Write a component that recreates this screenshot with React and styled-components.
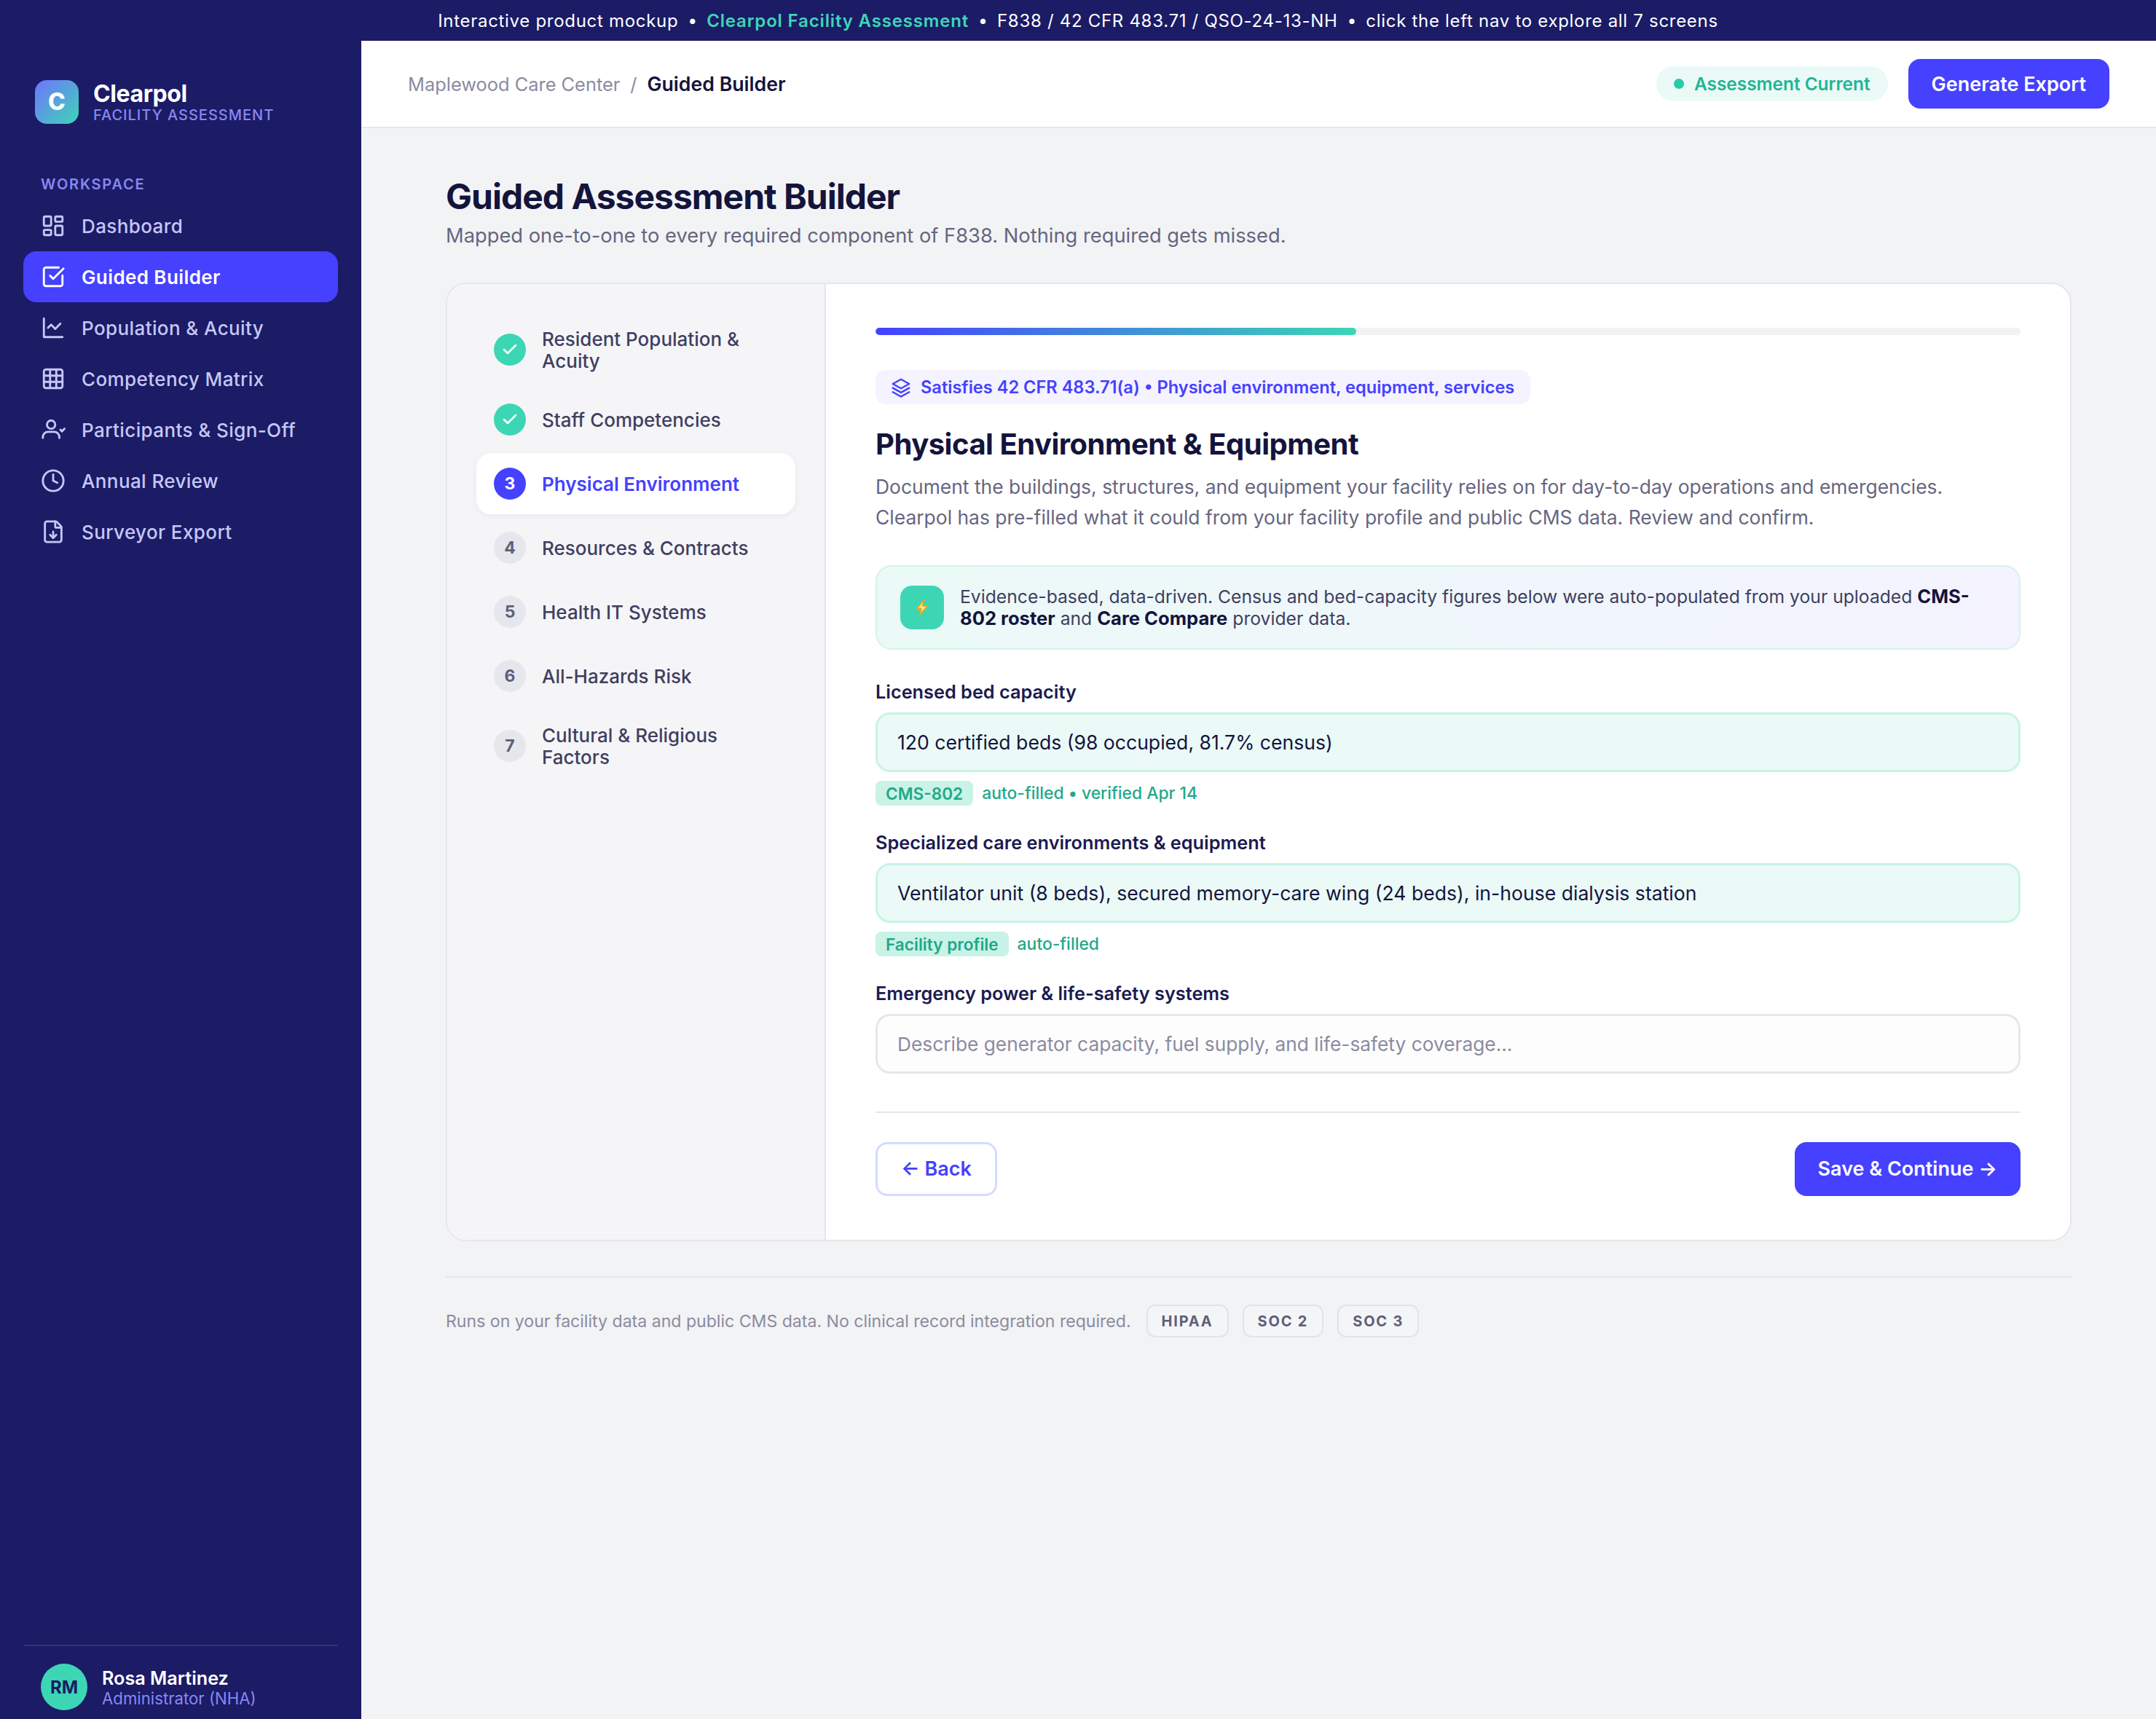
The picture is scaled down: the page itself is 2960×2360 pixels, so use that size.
import React from "react"
import styled, { createGlobalStyle } from "styled-components"
import { LayoutDashboard, SquareCheckBig, Grid3x3, Clock, FileDown, Check } from "lucide-react"

const Global = createGlobalStyle`
  * { box-sizing: border-box; }
  html, body { margin: 0; padding: 0; background: #f2f3f5; }
  body { font-family: Inter, "Noto Sans", sans-serif; color: #14143c; }
  #root { zoom: 2; }
`

const Page = styled.div`
  width: 1480px;
  height: 1180px;
  display: flex;
  flex-direction: column;
  overflow: hidden;
`

const Banner = styled.div`
  height: 28px;
  flex: none;
  background: #1b1b66;
  color: #fff;
  font-size: 12px;
  font-weight: 400;
  letter-spacing: 0.35px;
  display: flex;
  align-items: center;
  justify-content: center;
  white-space: pre;
  b { font-weight: 600; letter-spacing: 0.42px; color: #3dd6b5; }
`

const BannerSep = styled.span`
  font-size: 11.5px;
  letter-spacing: 0;
`

const Shell = styled.div`
  flex: 1;
  display: flex;
  min-height: 0;
`

const Sidebar = styled.aside`
  width: 248px;
  flex: none;
  background: #1b1b66;
  padding: 26.5px 16px 6px;
  display: flex;
  flex-direction: column;
`

const Brand = styled.div`
  display: flex;
  align-items: center;
  gap: 10px;
  padding: 0 8px;
  margin-bottom: 35px;
`

const LogoMark = styled.div`
  width: 30px;
  height: 30px;
  border-radius: 8px;
  background: linear-gradient(135deg, #6f74ff, #3dd6b5);
  color: #fff;
  font-size: 16px;
  font-weight: 800;
  display: flex;
  align-items: center;
  justify-content: center;
`

const BrandText = styled.div`
  padding-top: 1.5px;
`

const BrandName = styled.div`
  color: #fff;
  font-size: 16px;
  font-weight: 700;
  letter-spacing: -0.2px;
  line-height: 17px;
`

const BrandSub = styled.div`
  color: #8888f0;
  font-size: 10px;
  font-weight: 500;
  letter-spacing: 0.5px;
  line-height: 12px;
`

const NavLabel = styled.div`
  color: #8888f0;
  font-size: 10px;
  font-weight: 600;
  letter-spacing: 0.9px;
  padding: 0 12px;
  line-height: 13px;
  margin-bottom: 4.5px;
`

const NavItem = styled.div`
  height: 35px;
  flex: none;
  display: flex;
  align-items: center;
  gap: 11px;
  padding: 0 12px;
  border-radius: 9px;
  font-size: 13px;
  letter-spacing: 0.2px;
  font-weight: ${p => (p.$active ? 600 : 500)};
  color: ${p => (p.$active ? "#fff" : "#c6c7f5")};
  background: ${p => (p.$active ? "#4541ff" : "transparent")};
  svg { width: 17px; height: 17px; flex: none; }
`

const UserRow = styled.div`
  margin-top: auto;
  border-top: 1px solid rgba(255, 255, 255, 0.1);
  padding: 12px 12px 0;
  display: flex;
  align-items: center;
  gap: 10px;
`

const Avatar = styled.div`
  width: 32px;
  height: 32px;
  border-radius: 50%;
  background: #3dd6b5;
  color: #1b1b66;
  font-size: 12px;
  font-weight: 700;
  display: flex;
  align-items: center;
  justify-content: center;
`

const UserName = styled.div`
  color: #fff;
  font-size: 12.6px;
  font-weight: 600;
  line-height: 16px;
`

const UserRole = styled.div`
  color: #8888f0;
  font-size: 11.1px;
  line-height: 12px;
`

const Content = styled.main`
  flex: 1;
  min-width: 0;
  display: flex;
  flex-direction: column;
`

const Topbar = styled.header`
  height: 60px;
  flex: none;
  background: #fff;
  border-bottom: 1px solid #e6e7eb;
  padding: 0 32px;
  display: flex;
  align-items: center;
  justify-content: space-between;
`

const Crumbs = styled.div`
  font-size: 12.7px;
  color: #8b8ba0;
  display: flex;
  align-items: baseline;
  gap: 7px;
  b { color: #14143c; font-weight: 600; font-size: 13.35px; }
`

const TopActions = styled.div`
  display: flex;
  align-items: center;
  gap: 14px;
`

const StatusPill = styled.div`
  height: 24px;
  border-radius: 12px;
  background: #ebfaf7;
  color: #1fb594;
  font-size: 12.2px;
  font-weight: 600;
  padding: 0 12px;
  display: flex;
  align-items: center;
  gap: 7px;
  &::before {
    content: "";
    width: 7px;
    height: 7px;
    border-radius: 50%;
    background: #28cba8;
  }
`

const PrimaryButton = styled.button`
  height: ${p => p.$h || 34}px;
  padding: 0 16px;
  border: none;
  border-radius: 8px;
  background: #4541ff;
  color: #fff;
  font-family: inherit;
  font-size: 13.5px;
  font-weight: 600;
`

const Body = styled.div`
  flex: 1;
  padding: 32px 58px 0;
`

const PageTitle = styled.h1`
  margin: 0;
  font-size: 24px;
  line-height: 30px;
  font-weight: 700;
  letter-spacing: -0.5px;
  color: #14143c;
`

const PageSub = styled.p`
  margin: 2px 0 22px;
  font-size: 13.65px;
  line-height: 20px;
  color: #66667f;
`

const Card = styled.section`
  display: flex;
  height: 658px;
  background: #fff;
  border: 1px solid #e6e7eb;
  border-radius: 14px;
  overflow: hidden;
`

const Steps = styled.nav`
  width: 260px;
  flex: none;
  background: #f5f5f8;
  border-right: 1px solid #e6e7eb;
  padding: 20px;
  display: flex;
  flex-direction: column;
  gap: 2px;
`

const Step = styled.div`
  display: flex;
  align-items: center;
  gap: 11px;
  padding: 10px 12px;
  border-radius: 10px;
  font-size: 13px;
  line-height: 15px;
  font-weight: ${p => (p.$active ? 600 : 500)};
  color: ${p => (p.$active ? "#4541ff" : "#3f3f5f")};
  background: ${p => (p.$active ? "#fff" : "transparent")};
  box-shadow: ${p => (p.$active ? "0 1px 4px rgba(20, 20, 60, 0.06)" : "none")};
`

const StepLabel = styled.span`
  padding-top: 0.5px;
  margin-bottom: -0.5px;
`

const stepColors = {
  done: ["#3dd6b5", "#fff"],
  active: ["#4541ff", "#fff"],
  todo: ["#e6e7ec", "#5f5f7a"],
}

const StepDot = styled.span`
  width: 22px;
  height: 22px;
  flex: none;
  border-radius: 50%;
  background: ${p => stepColors[p.$state][0]};
  color: ${p => stepColors[p.$state][1]};
  font-size: 11.5px;
  font-weight: 700;
  display: flex;
  align-items: center;
  justify-content: center;
  svg { width: 12px; height: 12px; stroke-width: 2.5; }
`

const Form = styled.div`
  flex: 1;
  min-width: 0;
  padding: 30px 34px;
  display: flex;
  flex-direction: column;
  > * { flex: none; }
`

const Progress = styled.div`
  height: 5px;
  border-radius: 3px;
  background: #f1f2f4;
  margin-bottom: 24px;
  overflow: hidden;
`

const ProgressFill = styled.div`
  height: 100%;
  border-radius: 3px;
  background: linear-gradient(90deg, #4541ff, #3dd6b5);
`

const Ref = styled.div`
  align-self: flex-start;
  height: 23.5px;
  display: flex;
  align-items: center;
  gap: 6px;
  padding: 0 11px 0 10px;
  border-radius: 7px;
  background: #f4f3ff;
  color: #4541ff;
  font-size: 11.8px;
  font-weight: 600;
  svg { width: 15px; height: 15px; }
`

const StepTitle = styled.h2`
  margin: 14.5px 0 5.5px;
  font-size: 20px;
  line-height: 26px;
  font-weight: 700;
  letter-spacing: -0.25px;
  color: #14143c;
`

const Lead = styled.p`
  margin: 0 0 22.5px;
  font-size: 13.22px;
  line-height: 21px;
  color: #66667f;
`

const Callout = styled.div`
  height: 58px;
  display: flex;
  align-items: center;
  gap: 11px;
  padding: 0 16px;
  border: 1px solid #cff5ea;
  border-radius: 11px;
  background: linear-gradient(90deg, #ebfaf7, #f4f3ff);
  font-size: 12.35px;
  line-height: 15px;
  color: #3f3f5f;
  margin-bottom: 21px;
  b { font-weight: 700; font-size: 12.8px; color: #14143c; }
`

const BoltBox = styled.div`
  width: 30px;
  height: 30px;
  flex: none;
  border-radius: 8px;
  background: #3dd6b5;
  display: flex;
  align-items: center;
  justify-content: center;
`

const Field = styled.div`
  margin-bottom: 17.6px;
`

const Label = styled.div`
  font-size: 12.65px;
  line-height: 16px;
  font-weight: 600;
  color: #1b1b50;
  margin-bottom: 6px;
`

const Input = styled.div`
  height: 41px;
  display: flex;
  align-items: center;
  padding: 0 13.5px;
  border: 1.5px solid ${p => (p.$filled ? "#c9f3e7" : "#e6e7eb")};
  border-radius: 10px;
  background: ${p => (p.$filled ? "#ebfaf7" : "#fdfdfe")};
  color: ${p => (p.$filled ? "#14143c" : "#8b8ba0")};
  font-size: ${p => (p.$filled ? "13.3px" : "13.15px")};
`

const Source = styled.div`
  display: flex;
  align-items: center;
  gap: 6px;
  margin-top: 6px;
  color: #22a889;
  font-size: 11.45px;
  font-weight: 500;
`

const SourceTag = styled.span`
  height: 17px;
  padding: 0 7px;
  border-radius: 4px;
  background: #c9f3e7;
  font-size: 11.3px;
  font-weight: 600;
  display: flex;
  align-items: center;
`

const Actions = styled.div`
  margin-top: 8px;
  padding-top: 20px;
  border-top: 1px solid #e6e7eb;
  display: flex;
  justify-content: space-between;
`

const BackButton = styled.button`
  height: 37px;
  padding: 0 16px;
  border: 1.5px solid #d3dcfb;
  border-radius: 8px;
  background: #fff;
  color: #4541ff;
  font-family: inherit;
  font-size: 13.5px;
  font-weight: 600;
`

const Footer = styled.footer`
  margin-top: 24px;
  padding-top: 18.5px;
  border-top: 1px solid #e6e7eb;
  display: flex;
  align-items: center;
  gap: 9.5px;
  font-size: 11.54px;
  color: #8b8ba0;
`

const Chip = styled.span`
  height: 22.5px;
  display: flex;
  align-items: center;
  padding: 0 9.5px;
  border: 1px solid #e2e3e8;
  border-radius: 6px;
  background: #f4f5f7;
  color: #5f5f7a;
  font-size: 10px;
  font-weight: 700;
  letter-spacing: 0.9px;
  &:first-of-type { margin-left: 1px; }
`

const lineIcon = { viewBox: "0 0 24 24", fill: "none", stroke: "currentColor", strokeWidth: 2, strokeLinecap: "round", strokeLinejoin: "round" }

const ChartIcon = () => (
  <svg {...lineIcon}>
    <path d="M3 3v18h18" />
    <path d="m19 9-5 5-4-4-3 3" transform="translate(0 -1)" />
  </svg>
)

const SignOffIcon = () => (
  <svg {...lineIcon}>
    <circle cx="10" cy="7" r="4" />
    <path d="M2 20v-1a5 5 0 0 1 5-5h6a5 5 0 0 1 5 5v1" />
    <path d="m19 12 1.5 1.5L23 11" />
  </svg>
)

const LayersIcon = () => (
  <svg {...lineIcon}>
    <path d="M12 3 21 8 12 13 3 8Z" />
    <path d="m3 12.5 9 5 9-5" />
    <path d="m3 17 9 5 9-5" />
  </svg>
)

const BoltIcon = () => (
  <svg width="9" height="12" viewBox="0 0 18 24" stroke="#eba615" strokeWidth="1.6" strokeLinejoin="round">
    <path d="M12 1 2 13.5h6L5 23 16 10h-6.5L12 1Z" fill="#fde68a" />
  </svg>
)

const nav = [
  ["Dashboard", LayoutDashboard],
  ["Guided Builder", SquareCheckBig, true],
  ["Population & Acuity", ChartIcon],
  ["Competency Matrix", Grid3x3],
  ["Participants & Sign-Off", SignOffIcon],
  ["Annual Review", Clock],
  ["Surveyor Export", FileDown],
]

const steps = [
  ["Resident Population & Acuity", "done"],
  ["Staff Competencies", "done"],
  ["Physical Environment", "active"],
  ["Resources & Contracts", "todo"],
  ["Health IT Systems", "todo"],
  ["All-Hazards Risk", "todo"],
  ["Cultural & Religious Factors", "todo"],
]

const Sep = () => <BannerSep>{"  •  "}</BannerSep>

export default function App() {
  return (
    <Page>
      <Global />
      <Banner>
        Interactive product mockup<Sep /><b>Clearpol Facility Assessment</b><Sep />F838 / 42 CFR 483.71 / QSO-24-13-NH<Sep />click the left nav to explore all 7 screens
      </Banner>
      <Shell>
        <Sidebar>
          <Brand>
            <LogoMark>C</LogoMark>
            <BrandText>
              <BrandName>Clearpol</BrandName>
              <BrandSub>FACILITY ASSESSMENT</BrandSub>
            </BrandText>
          </Brand>
          <NavLabel>WORKSPACE</NavLabel>
          {nav.map(([label, Icon, active]) => (
            <NavItem key={label} $active={active}>
              <Icon />
              {label}
            </NavItem>
          ))}
          <UserRow>
            <Avatar>RM</Avatar>
            <div>
              <UserName>Rosa Martinez</UserName>
              <UserRole>Administrator (NHA)</UserRole>
            </div>
          </UserRow>
        </Sidebar>
        <Content>
          <Topbar>
            <Crumbs>
              <span>Maplewood Care Center</span>
              <span>/</span>
              <b>Guided Builder</b>
            </Crumbs>
            <TopActions>
              <StatusPill>Assessment Current</StatusPill>
              <PrimaryButton>Generate Export</PrimaryButton>
            </TopActions>
          </Topbar>
          <Body>
            <PageTitle>Guided Assessment Builder</PageTitle>
            <PageSub>Mapped one-to-one to every required component of F838. Nothing required gets missed.</PageSub>
            <Card>
              <Steps>
                {steps.map(([label, state], i) => (
                  <Step key={label} $active={state === "active"}>
                    <StepDot $state={state}>{state === "done" ? <Check /> : i + 1}</StepDot>
                    <StepLabel>{label}</StepLabel>
                  </Step>
                ))}
              </Steps>
              <Form>
                <Progress>
                  <ProgressFill style={{ width: "42%" }} />
                </Progress>
                <Ref>
                  <LayersIcon />
                  Satisfies 42 CFR 483.71(a) • Physical environment, equipment, services
                </Ref>
                <StepTitle>Physical Environment &amp; Equipment</StepTitle>
                <Lead>
                  Document the buildings, structures, and equipment your facility relies on for day-to-day operations and emergencies.
                  <br />
                  Clearpol has pre-filled what it could from your facility profile and public CMS data. Review and confirm.
                </Lead>
                <Callout>
                  <BoltBox>
                    <BoltIcon />
                  </BoltBox>
                  <div>
                    Evidence-based, data-driven. Census and bed-capacity figures below were auto-populated from your uploaded <b>CMS-802 roster</b> and <b>Care Compare</b> provider data.
                  </div>
                </Callout>
                <Field>
                  <Label>Licensed bed capacity</Label>
                  <Input $filled>120 certified beds (98 occupied, 81.7% census)</Input>
                  <Source>
                    <SourceTag>CMS-802</SourceTag>
                    auto-filled • verified Apr 14
                  </Source>
                </Field>
                <Field>
                  <Label>Specialized care environments &amp; equipment</Label>
                  <Input $filled>Ventilator unit (8 beds), secured memory-care wing (24 beds), in-house dialysis station</Input>
                  <Source>
                    <SourceTag>Facility profile</SourceTag>
                    auto-filled
                  </Source>
                </Field>
                <Field>
                  <Label>Emergency power &amp; life-safety systems</Label>
                  <Input>Describe generator capacity, fuel supply, and life-safety coverage...</Input>
                </Field>
                <Actions>
                  <BackButton>← Back</BackButton>
                  <PrimaryButton $h={37}>Save &amp; Continue →</PrimaryButton>
                </Actions>
              </Form>
            </Card>
            <Footer>
              Runs on your facility data and public CMS data. No clinical record integration required.
              <Chip>HIPAA</Chip>
              <Chip>SOC 2</Chip>
              <Chip>SOC 3</Chip>
            </Footer>
          </Body>
        </Content>
      </Shell>
    </Page>
  )
}
